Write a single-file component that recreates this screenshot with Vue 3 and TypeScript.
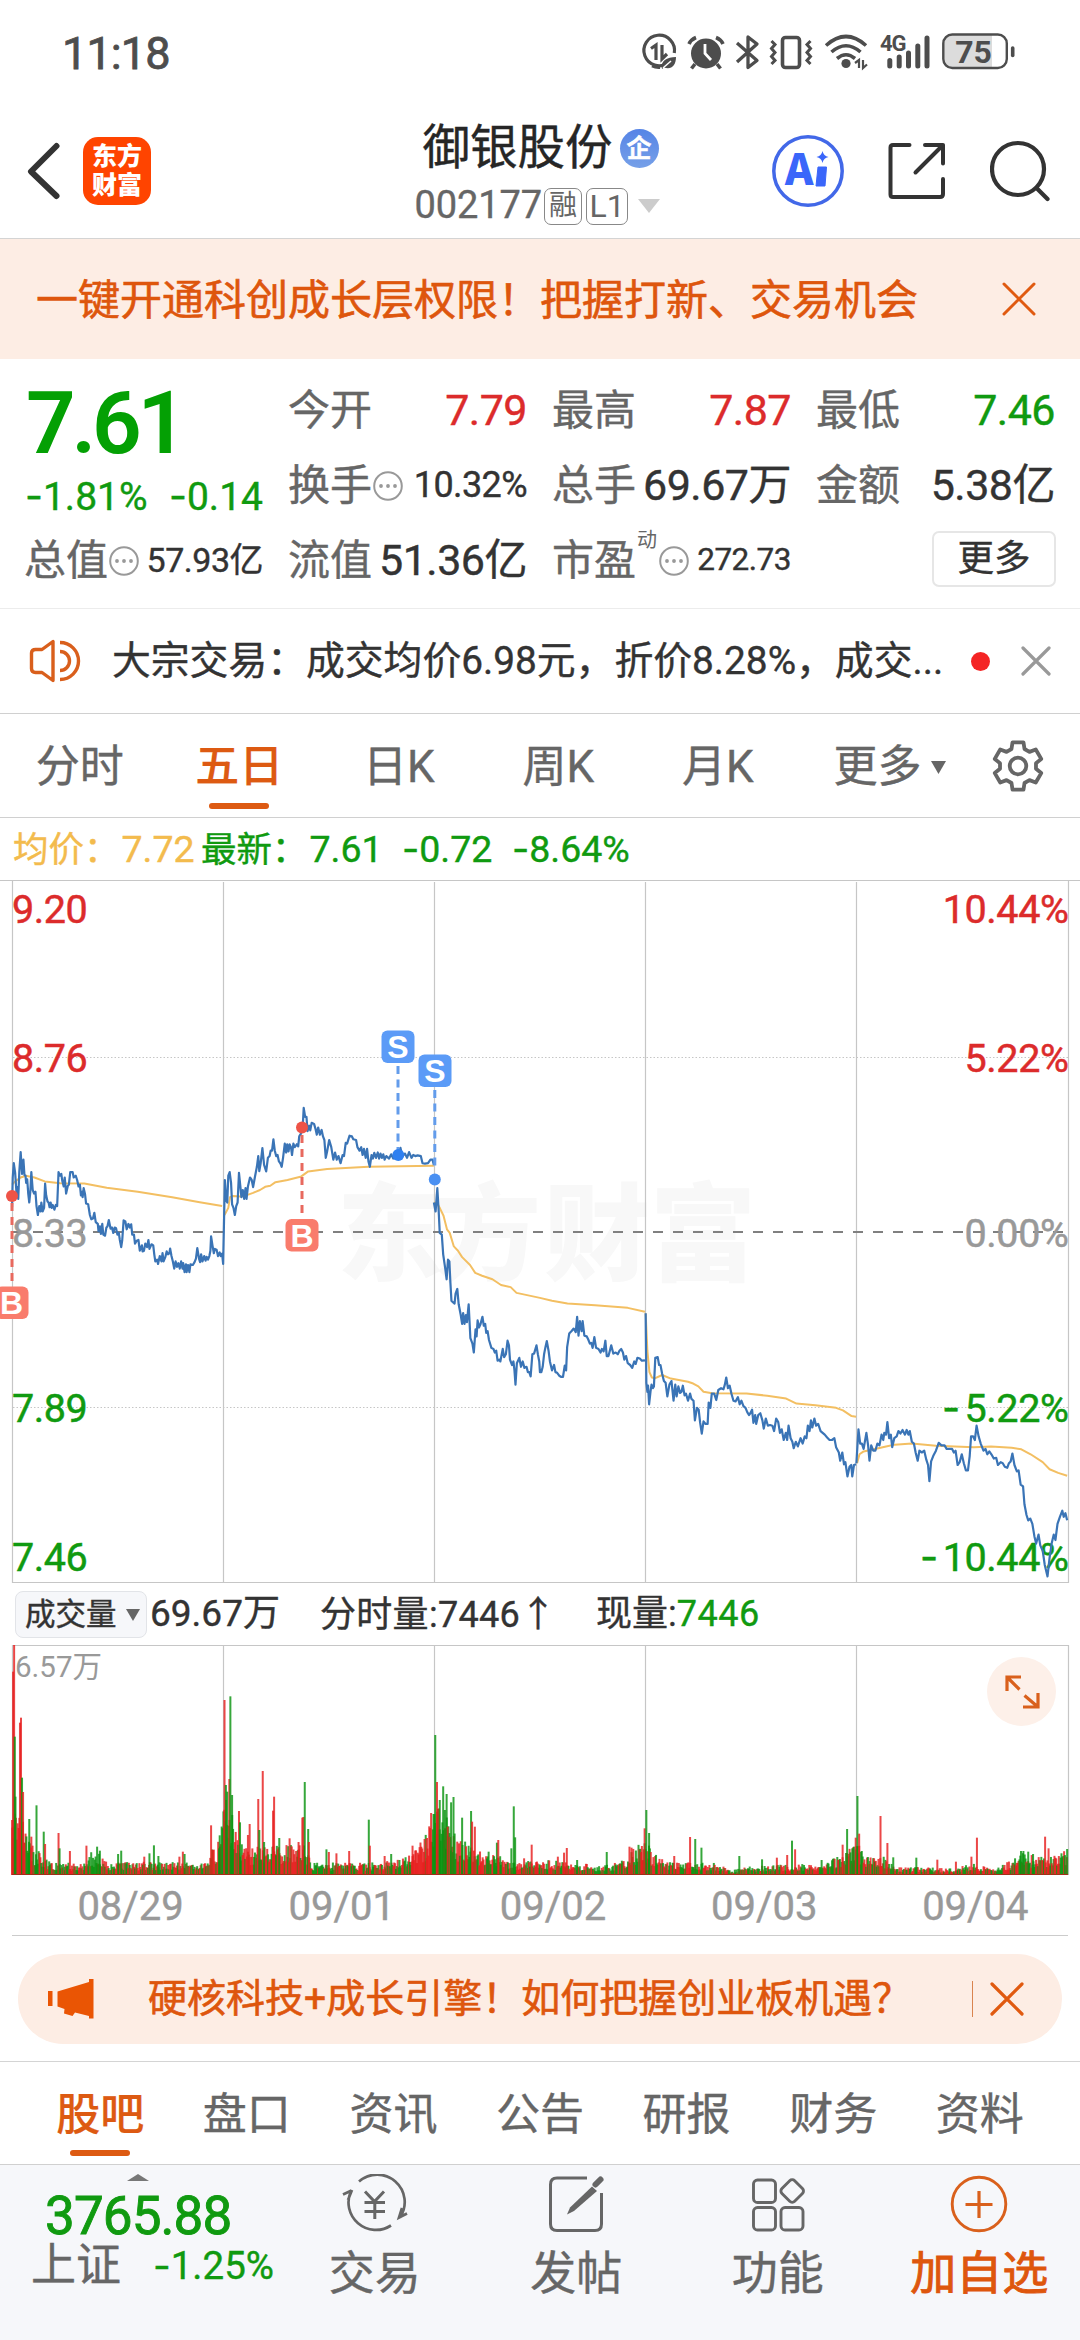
<script setup lang="ts">
type Tone = 'up' | 'down' | 'plain'

interface Cell {
  label: string
  value: string
  tone: Tone
  size?: 'md' | 'sm' | 'xs'
  info?: boolean
  sup?: string
}

const cells: Cell[] = [
  { label: '今开', value: '7.79', tone: 'up' },
  { label: '最高', value: '7.87', tone: 'up' },
  { label: '最低', value: '7.46', tone: 'down' },
  { label: '换手', value: '10.32%', tone: 'plain', size: 'md', info: true },
  { label: '总手', value: '69.67万', tone: 'plain' },
  { label: '金额', value: '5.38亿', tone: 'plain' },
]
const lastRow: Cell[] = [
  { label: '总值', value: '57.93亿', tone: 'plain', size: 'sm', info: true },
  { label: '流值', value: '51.36亿', tone: 'plain' },
  { label: '市盈', value: '272.73', tone: 'plain', size: 'xs', info: true, sup: '动' },
]

const periods = ['分时', '五日', '日K', '周K', '月K']
const sections = ['股吧', '盘口', '资讯', '公告', '研报', '财务', '资料']
const dates = ['08/29', '09/01', '09/02', '09/03', '09/04']

const gridX = [223.5, 434.5, 645.5, 856.5]
const leftScale = [
  { y: 923, t: '9.20', c: '#dc2b2b' },
  { y: 1072, t: '8.76', c: '#dc2b2b' },
  { y: 1247, t: '8.33', c: '#999' },
  { y: 1422, t: '7.89', c: '#109a10' },
  { y: 1571, t: '7.46', c: '#109a10' },
]
const rightScale = [
  { y: 923, t: '10.44%', c: '#dc2b2b' },
  { y: 1072, t: '5.22%', c: '#dc2b2b' },
  { y: 1247, t: '0.00%', c: '#999' },
  { y: 1422, t: '5.22%', c: '#109a10', neg: 942 },
  { y: 1571, t: '10.44%', c: '#109a10', neg: 920 },
]

/* Price and average series, in plot units */
const price: string[] = [
  '35,468 37,385 40,345 44,372 48,430 50,412 53,445 56,370 60,314 64,375 68,335 71,378 74,380 76,400 79,390 82,430 85,455 88,425 91,370 95,420 99,430 103,425 106,465 110,490 114,465 118,480 120,455 124,480 128,470 131,402 134,435 138,452 141,455 144,468 147,455 150,470 153,462 158,475 162,462 166,465 170,370 174,380 178,375 181,395 185,410 188,385 192,430 197,408 200,405 204,370 211,370 214,385 220,380 224,392 228,410 232,405 235,435 238,425 240,440 243,415 247,432 250,458 256,460 261,490 265,502 270,500 274,484 278,510 284,515 286,535 290,522 293,543 297,515 300,545 305,548 309,525 312,522 316,504 321,528 325,525 329,540 333,525 337,527 341,545 345,540 348,560 352,580 355,560 359,505 364,508 368,530 373,515 377,525 381,516 384,545 389,545 392,570 397,562 402,560 406,590 412,575 414,592 418,590 422,570 427,580 431,560 434,585 440,572 445,575 448,600 451,620 456,615 459,627 464,605 469,620 472,597 475,620 480,608 484,592 488,600 492,597 494,584 498,605 502,620 506,640 510,620 514,635 518,625 522,640 526,620 530,640 532,625 536,650 540,628 542,650 546,630 550,650 553,628 560,630 565,622 569,612 573,583 578,612 581,622 584,600 588,620 593,605 597,618 600,607 604,615 608,605 611,590 613,550 617,575 621,597 624,585 629,587 633,605 638,595 641,605 645,598 648,627 653,392 657,450 660,455 663,380 667,370 671,400 674,460 678,470 682,490 686,465 690,455 694,372 698,410 701,440 705,420 709,445 713,415 716,445 720,410 726,385 731,392 735,412 740,385 746,355 750,325 753,367 757,345 762,303 767,350 773,368 778,330 783,325 786,310 790,310 794,278 798,310 802,325 806,322 810,340 814,345 818,355 822,330 827,290 831,315 834,292 838,312 841,292 845,300 848,322 852,290 856,300 862,292 866,298 869,270 874,262 879,245 882,190 886,215 890,215 893,255 898,240 901,253 905,232 912,235 916,248 920,265 924,245 929,265 934,252 938,270 942,280 946,330 950,312 956,280 962,300 968,335 973,315 978,335 983,325 989,345 995,322 999,325 1004,288 1008,290 1015,268 1022,270 1026,278 1034,280 1038,300 1044,310 1049,300 1053,322 1057,305 1062,330 1066,305 1070,340 1074,355 1079,322 1083,332 1087,316 1092,330 1097,315 1101,332 1105,318 1109,330 1113,320 1117,335 1122,325 1130,332 1136,320 1142,332 1148,320 1155,323 1163,302 1168,325 1176,318 1182,330 1188,314 1195,330 1200,322 1206,325 1213,323 1222,325 1227,345 1234,346 1243,345 1250,335 1256,335 1260,350',
  '1260,455 1265,480 1270,415 1274,480 1277,540 1283,545 1287,600 1293,640 1297,670 1301,615 1305,620 1308,680 1311,730 1316,735 1320,738 1323,710 1328,697 1332,740 1338,770 1342,795 1345,765 1349,795 1353,770 1356,790 1361,740 1366,835 1372,850 1376,875 1381,810 1384,830 1387,785 1391,805 1395,797 1401,775 1405,800 1409,795 1412,820 1416,815 1420,840 1427,862 1433,865 1437,875 1441,870 1445,898 1450,895 1453,900 1460,865 1464,888 1469,880 1474,842 1478,855 1481,895 1487,910 1491,900 1494,925 1497,965 1501,905 1508,890 1513,915 1518,900 1523,918 1529,915 1533,930 1537,930 1541,942 1546,880 1551,878 1558,855 1562,880 1566,900 1568,930 1572,930 1576,915 1580,880 1584,860 1588,843 1593,870 1597,900 1603,925 1609,910 1613,930 1618,932 1624,940 1629,943 1635,943 1640,912 1644,925 1647,860 1653,822 1660,815 1666,808 1672,818 1676,775 1680,828 1684,787 1689,815 1692,787 1697,828 1704,830 1708,838 1713,850 1717,848 1721,862 1726,832 1731,862 1738,865 1744,875 1748,865 1753,872 1758,842 1762,885 1767,885 1771,870 1775,855 1781,878 1788,875 1794,880 1799,870 1804,865 1809,875 1813,895 1818,885 1823,905 1830,910 1836,918 1842,900 1846,907 1851,890 1858,892 1864,898 1873,897',
  '1875,765 1877,960 1880,985 1882,968 1885,1020 1889,985 1892,965 1896,975 1899,970 1903,890 1910,888 1914,910 1918,910 1923,935 1928,955 1933,960 1938,998 1944,965 1950,955 1956,1010 1961,965 1965,998 1970,970 1975,988 1979,985 1983,968 1988,995 1992,990 1998,1010 2004,990 2008,1005 2014,1010 2018,1065 2024,1030 2029,1035 2033,1070 2038,1102 2043,1068 2049,1075 2055,1075 2058,1015 2063,1030 2067,990 2074,990 2080,1008 2086,980 2094,975 2101,978 2105,965 2109,945 2114,975 2119,968 2124,990 2130,1010 2136,1012 2143,1000 2148,1020 2153,1010 2159,1025 2165,1030 2170,1042 2175,1050 2179,1045 2184,1035 2188,1072 2193,1050 2196,1075 2202,1050 2208,1045 2214,1065 2218,1088 2224,1060 2230,1080 2236,1078 2243,1080 2248,1095 2254,1060 2260,1070 2265,1100 2270,1090 2276,1120 2282,1100 2286,1120 2290,1080 2296,1115 2301,1125 2305,1143 2311,1125 2317,1138 2325,1115 2331,1130 2337,1110 2342,1115 2346,1080 2351,1095 2355,1065 2359,1085 2365,1060 2370,1080 2376,1075 2383,1095 2389,1100 2395,1105 2402,1113 2409,1120 2416,1120 2423,1115 2428,1140 2436,1155 2440,1178 2446,1155 2451,1188 2455,1182 2461,1222 2467,1195 2472,1190 2475,1222 2480,1190 2486,1188',
  '2487,1185 2493,1090 2498,1130 2503,1130 2508,1145 2516,1100 2521,1135 2525,1178 2530,1135 2536,1150 2542,1150 2548,1130 2554,1135 2560,1105 2565,1120 2568,1100 2573,1105 2577,1070 2582,1115 2587,1105 2591,1140 2597,1115 2604,1110 2609,1095 2615,1102 2621,1092 2628,1105 2633,1092 2638,1105 2642,1095 2648,1125 2654,1130 2659,1155 2665,1178 2670,1150 2677,1155 2684,1150 2690,1175 2695,1190 2699,1235 2704,1180 2710,1165 2718,1150 2726,1128 2734,1135 2743,1135 2749,1145 2757,1145 2765,1145 2770,1155 2775,1150 2781,1190 2787,1182 2793,1160 2799,1185 2805,1205 2811,1205 2816,1165 2820,1110 2826,1110 2831,1120 2836,1080 2842,1110 2848,1130 2856,1150 2862,1145 2867,1160 2873,1152 2879,1160 2886,1172 2893,1170 2898,1190 2906,1182 2912,1185 2918,1195 2925,1198 2930,1185 2935,1180 2940,1158 2946,1190 2953,1208 2958,1205 2964,1245 2971,1250 2975,1300 2981,1330 2986,1345 2992,1340 2998,1355 3004,1390 3009,1410 3016,1385 3021,1415 3028,1430 3034,1470 3042,1502 3048,1450 3054,1410 3060,1385 3065,1400 3071,1355 3078,1335 3085,1318 3089,1335 3094,1325 3099,1345',
]
const average: string[] = [
  '35,405 45,395 60,385 75,380 100,385 130,396 175,401 245,402 310,414 400,425 500,440 580,454 645,465',
  '652,490 663,470 668,440 675,437 700,438 715,435 735,428 755,420 770,411 785,408 800,398 835,392 875,382 895,368 950,361 1070,355 1260,352',
  '1260,455 1270,458 1278,472 1288,492 1298,530 1306,540 1318,578 1330,590 1342,608 1365,630 1380,652 1400,660 1430,670 1455,686 1483,692 1500,708 1568,722 1603,730 1648,738 1728,743 1823,750 1873,761',
  '1875,765 1880,870 1886,930 1893,945 1903,947 1923,938 1948,948 1998,957 2013,962 2028,970 2043,985 2068,989 2168,990 2228,996 2283,1004 2313,1018 2368,1023 2428,1030 2448,1037 2473,1053 2486,1055',
  '2489,1185 2496,1160 2508,1152 2538,1146 2573,1138 2598,1133 2648,1130 2718,1136 2828,1140 2878,1138 2938,1142 2966,1146 2993,1160 3028,1182 3048,1202 3073,1212 3099,1220',
]

/* Volume: an envelope for quiet minutes plus the individual peaks */
const envelope: [number, number][] = [
  [35, 200], [75, 140], [100, 80], [135, 50], [160, 36], [245, 36], [262, 70], [290, 60], [310, 36], [400, 38], [500, 38],
  [560, 36], [600, 50], [640, 110], [655, 240], [680, 160], [700, 95], [730, 80], [800, 85], [870, 95], [895, 75],
  [905, 36], [1100, 36], [1170, 48], [1200, 65], [1240, 120], [1265, 230], [1300, 180], [1330, 105], [1380, 85],
  [1400, 60], [1440, 65], [1470, 38], [1568, 45], [1628, 40], [1668, 34], [1768, 29], [1818, 50], [1868, 110],
  [1898, 66], [1928, 44], [2008, 36], [2068, 38], [2128, 14], [2168, 26], [2328, 32], [2388, 24], [2438, 62],
  [2468, 85], [2498, 85], [2528, 56], [2568, 54], [2598, 24], [2768, 20], [2828, 34], [2888, 16], [2938, 44],
  [2968, 68], [3008, 54], [3048, 50], [3100, 78],
]
const peaks =
  '35,720r 38,275r 41,195r 43,470g 45,650g 58,428r 61,413r 64,593g 67,636r 85,717g 91,770r 106,676g 127,755g 131,792r 170,759r 173,805g 203,813r 251,797r 282,800g 290,812g 343,822g 352,812g 419,830r 434,820g 447,796g 460,828g 521,830r 531,815r 536,822g 613,736r 638,766g 652,360r 656,615g 660,635g 666,597r 669,349g 674,645g 694,693r 697,727g 720,765r 725,732r 750,657r 753,750g 763,573r 767,786g 793,692r 796,650r 811,774g 841,775r 867,786r 878,713r 881,711r 885,606g 895,747g 897,786r 948,808g 955,816r 977,820r 1014,813r 1071,719g 1074,797r 1117,828r 1136,822g 1198,797r 1233,777r 1240,774r 1252,699r 1259,702g 1264,465g 1269,606r 1277,660g 1287,619g 1292,690g 1297,642g 1300,740r 1310,667g 1317,651g 1342,713g 1368,693g 1371,725r 1379,740r 1419,815g 1443,788g 1447,780r 1485,805g 1492,679g 1496,772g 1522,835r 1544,794r 1620,830r 1638,818r 1646,804r 1676,840g 1762,816g 1828,800r 1834,803r 1864,798r 1872,745r 1877,690g 1885,759g 1958,828r 2004,771r 2019,777g 2037,803g 2147,828g 2213,838g 2256,833r 2286,825r 2300,782g 2309,808r 2386,840g 2447,794r 2460,747g 2475,805g 2485,773r 2490,648g 2495,761r 2557,708r 2577,789r 2594,832g 2661,833g 2722,839r 2776,845r 2821,830r 2837,773r 2965,813g 2972,813g 2986,815g 3000,822g 3035,770r 3045,805r 3099,807g'

let seed = 20250904
const rand = (): number => {
  seed = (seed * 1664525 + 1013904223) % 4294967296
  return seed / 4294967296
}
const envAt = (x: number): number => {
  for (let i = 1; i < envelope.length; i++) {
    const [x0, h0] = envelope[i - 1]
    const [x1, h1] = envelope[i]
    if (x <= x1) return h0 + ((h1 - h0) * (x - x0)) / (x1 - x0)
  }
  return 40
}
/* Share of rising minutes around x */
const redShare = (x: number): number => {
  if (x > 815 && x < 880) return 0.85
  if (x > 1195 && x < 1254) return 0.95
  if (x > 255 && x < 295) return 0.2
  if (x > 1255 && x < 1330) return 0.3
  if (x > 2960 && x < 3010) return 0.25
  return 0.52
}
interface Bar { x: number; h: number; up: boolean }
const bars: Bar[] = []
for (let i = 0; i < 1205; i++) {
  const ux = 36 + i * 2.543
  bars.push({ x: ux / 2.904, h: (envAt(ux) * (0.35 + 0.7 * rand())) / 3, up: rand() < redShare(ux) })
}
for (const p of peaks.split(' ')) {
  const m = /(\d+),(\d+)([rg])/.exec(p)
  if (m) bars.push({ x: Number(m[1]) / 2.904, h: (885 - Number(m[2])) / 3, up: m[3] === 'r' })
}

const polar = (r: number, deg: number): string => {
  const a = (deg * Math.PI) / 180
  return `${(r * Math.sin(a)).toFixed(2)},${(-r * Math.cos(a)).toFixed(2)}`
}
const gear = [0, 60, 120, 180, 240, 300]
  .flatMap((k) => [polar(18.2, k - 21), polar(24.3, k - 13), polar(24.3, k + 13), polar(18.2, k + 21)])
  .join(' ')
</script>

<template>
  <div class="screen">
    <div class="status">
      <span class="time">11:18</span>
      <svg class="status-icons" width="386" height="44" viewBox="640 30 386 44" fill="none" stroke="#4d4d4d">
        <path d="M668 63A15.300 15.300 0 1 1 674.300 53" stroke-width="3.200" />
        <path d="M660 67.500A15.300 15.300 0 0 1 652 66" stroke-width="3" />
        <path d="M651 48.500L656 45V60M662 45V59L667 54" stroke-width="3.200" />
        <path d="M662 69C660 61 667 57 676 57C676 66 671 70 664 67.500L662 69Z" fill="#4d4d4d" stroke="none" />
        <path d="M663 68L671 61" stroke="#fff" stroke-width="1.500" />
        <circle cx="706" cy="53.500" r="15" fill="#4d4d4d" stroke="none" />
        <path d="M689 44Q691 39.500 696 37.500M716 37.500Q721 39.500 723 44M695 64L691.500 68.500M717 64L720.500 68.500" stroke-width="3.600" />
        <path d="M705 44V53.500L711 60" stroke="#fff" stroke-width="2.800" />
        <path d="M737 43L757 60.500L748 67.500V37L757 44L737 62" stroke-width="3.300" stroke-linejoin="round" />
        <rect x="782.500" y="37.500" width="17" height="30" rx="3" stroke-width="3.600" />
        <path d="M771.500 41L775 44.500L771.500 48.500L775 52.500L771.500 56.500L775 60.500L771.500 64M810.500 41L807 44.500L810.500 48.500L807 52.500L810.500 56.500L807 60.500L810.500 64" stroke-width="3" />
        <path d="M826 45.500Q846 27.500 866 45.500M831.500 52Q846 39.500 860.500 52M837 58.500Q846 51 855 58.500" stroke-width="3.600" />
        <circle cx="846" cy="63.500" r="4.600" fill="#4d4d4d" stroke="none" />
        <path d="M855 63L859 60V68M863 60V68L867 64.500" stroke-width="2.200" />
        <path d="M889.800 60.500V66M899.200 57V66M908.500 53V66M917.800 46V66M927 38V66" stroke-width="5" stroke-linecap="round" />
        <path d="M953 35H992V68H953Q944 66 944 59V44Q944 36 953 35Z" fill="#dcdcdc" stroke="none" />
        <rect x="943.300" y="34.500" width="63.500" height="33.500" rx="9" stroke-width="2.400" />
        <path d="M1012.700 48V55.500" stroke-width="3.600" stroke-linecap="round" />
        <text x="880" y="51" class="net" fill="#4d4d4d" stroke="none">4G</text>
        <text x="973.500" y="63" class="bat" fill="#4d4d4d" stroke="none" text-anchor="middle">75</text>
      </svg>
    </div>

    <header class="header">
      <div class="head-left">
        <svg width="34" height="58" viewBox="0 0 34 58"><path d="M30.500 4L5 29.500L30.500 54" fill="none" stroke="#333" stroke-width="6" stroke-linecap="round" stroke-linejoin="round" /></svg>
        <div class="logo"><span>东方</span><span>财富</span></div>
      </div>
      <div class="head-mid">
        <div class="name">御银股份<span class="qi">企</span></div>
        <div class="code">
          <span>002177</span><span class="chip rong">融</span><span class="chip l1">L1</span>
          <svg width="22" height="14" viewBox="0 0 22 14"><path d="M0 0H22L11 14Z" fill="#ccc" /></svg>
        </div>
      </div>
      <div class="head-right">
        <svg width="72" height="72" viewBox="0 0 72 72">
          <circle cx="36" cy="36" r="34.200" fill="none" stroke="#4268e8" stroke-width="3.500" />
          <text x="13" y="49.500" class="ai">A</text>
          <path d="M46 32H54.500L53 51H44Z" fill="#3a66fa" stroke="#3a66fa" stroke-width="1" stroke-linejoin="round" />
          <path d="M50.500 16Q51.500 21 56.500 22Q51.500 23 50.500 28Q49.500 23 44.500 22Q49.500 21 50.500 16Z" fill="#3a66fa" />
        </svg>
        <svg width="60" height="60" viewBox="0 0 60 60" fill="none" stroke="#333" stroke-width="4" stroke-linecap="round" stroke-linejoin="round">
          <path d="M22.500 4H6Q3.500 4 3.500 6.500V53.500Q3.500 56 6 56H53Q56 56 56 53V38M38 4H56V22.500M56 4L28.500 31.500" />
        </svg>
        <svg width="60" height="62" viewBox="0 0 60 62" fill="none" stroke="#333" stroke-width="4.200" stroke-linecap="round">
          <circle cx="28" cy="29" r="26" /><path d="M46.500 48L57.500 59" />
        </svg>
      </div>
    </header>

    <div class="promo">
      <span>一键开通科创成长层权限！把握打新、交易机会</span>
      <svg width="34" height="34" viewBox="0 0 34 34"><path d="M2 2L32 32M32 2L2 32" stroke="#e05a10" stroke-width="3" stroke-linecap="round" /></svg>
    </div>

    <section class="quote">
      <div class="now">
        <div class="last">7.61</div>
        <div class="chg"><span><i>-</i>1.81%</span><span><i>-</i>0.14</span></div>
      </div>
      <div v-for="c in cells" :key="c.label" class="cell">
        <span class="lab">{{ c.label }}</span>
        <svg v-if="c.info" class="info" width="30" height="30" viewBox="0 0 30 30"><circle cx="15" cy="15" r="13.800" fill="none" stroke="#999" stroke-width="2" /><path d="M8 15h.01M15 15h.01M22 15h.01" stroke="#999" stroke-width="3.800" stroke-linecap="round" /></svg>
        <span class="val" :class="[c.tone, c.size]">{{ c.value }}</span>
      </div>
      <div v-for="c in lastRow" :key="c.label" class="cell">
        <span class="lab">{{ c.label }}</span>
        <span v-if="c.sup" class="sup">{{ c.sup }}</span>
        <svg v-if="c.info" class="info" width="30" height="30" viewBox="0 0 30 30"><circle cx="15" cy="15" r="13.800" fill="none" stroke="#999" stroke-width="2" /><path d="M8 15h.01M15 15h.01M22 15h.01" stroke="#999" stroke-width="3.800" stroke-linecap="round" /></svg>
        <span class="val" :class="[c.tone, c.size]">{{ c.value }}</span>
      </div>
      <div class="cell end"><button class="more">更多</button></div>
    </section>

    <div class="notice">
      <svg width="52" height="44" viewBox="0 0 52 44" fill="none" stroke="#d95f1c" stroke-width="3.400">
        <path d="M24 2.500V41.500L13 33.500H6.500Q2.500 33.500 2.500 29.500V14Q2.500 10.500 6.500 10.500H13Z" stroke-linejoin="round" />
        <path d="M31 3.500A18.500 18.500 0 0 1 31 40.500M31 12.500A9.500 9.500 0 0 1 31 31.500" />
      </svg>
      <span class="msg">大宗交易：成交均价6.98元，折价8.28%，成交...</span>
      <span class="dot"></span>
      <svg width="30" height="30" viewBox="0 0 30 30"><path d="M2 2L28 28M28 2L2 28" stroke="#999" stroke-width="3.200" stroke-linecap="round" /></svg>
    </div>

    <nav class="periods">
      <div v-for="p in periods" :key="p" class="tab" :class="{ on: p === '五日' }">{{ p }}</div>
      <div class="tab drop">更多<svg width="15" height="13" viewBox="0 0 15 13"><path d="M0 0H15L7.500 13Z" fill="#666" /></svg></div>
      <svg class="gear" width="54" height="54" viewBox="-27 -27 54 54" fill="none" stroke="#666" stroke-width="3.800">
        <polygon :points="gear" stroke-linejoin="round" /><circle r="8.300" />
      </svg>
    </nav>

    <div class="legend">
      <span class="avg">均价：<b>7.72</b></span>
      <span class="new">最新：<b>7.61</b></span>
      <span class="d1"><i>-</i>0.72</span>
      <span class="d2"><i>-</i>8.64%</span>
    </div>

    <svg class="plot" width="1080" height="703" viewBox="0 880 1080 703">
      <g class="mark"><text x="337" y="1272">东</text><text x="435" y="1272">方</text><text x="544" y="1272">财</text><text x="650" y="1272">富</text></g>
      <g stroke="#c6c6c6" stroke-width="1.200">
        <path d="M0 880.500H1080" />
        <path d="M12.500 881V1582.500H1068.500V881" fill="none" />
        <path v-for="x in gridX" :key="x" :d="`M${x} 882V1582`" />
        <path d="M13 1057.500H1068M13 1407.500H1068" stroke-width="1" stroke-dasharray="1.500 2" />
      </g>
      <path d="M13 1232H1068" stroke="#808080" stroke-width="1.800" stroke-dasharray="10 10" />
      <g class="scale">
        <text v-for="l in leftScale" :key="l.y" x="12" :y="l.y" :fill="l.c" :stroke="l.c">{{ l.t }}</text>
        <template v-for="r in rightScale" :key="r.y">
          <text x="1068.500" :y="r.y" :fill="r.c" :stroke="r.c" text-anchor="end">{{ r.t }}</text>
          <text v-if="r.neg" class="neg" :x="r.neg" :y="r.y" :fill="r.c" :stroke="r.c">-</text>
        </template>
      </g>
      <g class="series" transform="translate(0 1040) scale(0.34435 0.35714)">
        <polyline v-for="(s, i) in average" :key="'a' + i" :points="s" stroke="#f3bf62" stroke-width="2" />
        <polyline v-for="(s, i) in price" :key="'p' + i" :points="s" stroke="#3a74b6" stroke-width="2.200" />
      </g>
      <g fill="none" stroke-width="3">
        <path d="M12 1203V1286M302 1135V1217" stroke="#e8695e" stroke-dasharray="8 6" />
        <path d="M398 1066V1150M434.800 1090V1166" stroke="#639ceb" stroke-dasharray="8 5.500" />
      </g>
      <circle cx="12" cy="1196" r="6" fill="#ee5347" /><circle cx="302" cy="1127.500" r="6" fill="#ee5347" />
      <circle cx="398.300" cy="1155" r="6" fill="#2f80f0" /><circle cx="434.800" cy="1179.500" r="6" fill="#4a90f2" />
      <g class="flag">
        <rect x="-4" y="1286.500" width="32.500" height="32.500" rx="6" fill="#f97c6c" /><text x="11.500" y="1314">B</text>
        <rect x="285.500" y="1219" width="33" height="32.500" rx="6" fill="#f97c6c" /><text x="302" y="1246.500">B</text>
        <rect x="381.500" y="1030.500" width="33" height="32.500" rx="6" fill="#5b9bf7" /><text x="398" y="1058">S</text>
        <rect x="418.500" y="1054.500" width="33" height="32.500" rx="6" fill="#5b9bf7" /><text x="435" y="1082">S</text>
      </g>
    </svg>

    <div class="vol-head">
      <div class="pick">成交量<svg width="14" height="12" viewBox="0 0 14 12"><path d="M0 0H14L7 12Z" fill="#666" /></svg></div>
      <span class="v1">69.67万</span>
      <span class="v2">分时量:7446<em>↑</em></span>
      <span class="v3">现量:<b>7446</b></span>
    </div>

    <div class="vol">
      <svg width="1080" height="231" viewBox="0 1645 1080 231">
        <path d="M12.500 1875V1645.500H1068.500V1875" fill="none" stroke="#c6c6c6" stroke-width="1.200" />
        <path v-for="x in gridX" :key="x" :d="`M${x} 1646V1875`" stroke="#c6c6c6" stroke-width="1.200" />
        <rect v-for="(b, i) in bars" :key="i" :x="b.x - 1" :y="1875 - b.h" width="2" :height="b.h" :fill="b.up ? '#e61e1e' : '#0a9410'" fill-opacity="0.820" />
        <path d="M12 1874.500H1068" stroke="#a03018" />
        <text x="15" y="1677" class="vmax">6.57万</text>
      </svg>
      <div class="expand">
        <svg width="36" height="36" viewBox="0 0 36 36" fill="none" stroke="#d9601c" stroke-width="3.200"><path d="M17 3H3V17M3 3L15.500 15.500M19 33H34V19M34 33L20.500 21.500" /></svg>
      </div>
    </div>

    <div class="dates"><span v-for="d in dates" :key="d">{{ d }}</span></div>

    <div class="pill-wrap">
      <div class="pill">
        <svg width="46" height="40" viewBox="0 0 46 40" fill="#ea5504"><path d="M0 12H4.500V27H0ZM9.500 12.500L41 3V0H45.500V39.500H41V37L27 33.500L24.500 37L16 34.500L16.500 30L9.500 27.500Z" /></svg>
        <span class="ptxt">硬核科技+成长引擎！如何把握创业板机遇？</span>
        <span class="bar"></span>
        <svg width="34" height="34" viewBox="0 0 34 34"><path d="M2 2L32 32M32 2L2 32" stroke="#e05a10" stroke-width="3.200" stroke-linecap="round" /></svg>
      </div>
    </div>

    <nav class="sections">
      <div v-for="s in sections" :key="s" class="tab" :class="{ on: s === '股吧' }">{{ s }}</div>
    </nav>

    <footer class="dock">
      <div class="index">
        <svg width="22" height="7" viewBox="0 0 22 7"><path d="M0 7L11 0L22 7Z" fill="#777" /></svg>
        <div class="pts">3765.88</div>
        <div class="row"><span>上证</span><span class="pct"><i>-</i>1.25%</span></div>
      </div>
      <div class="act">
        <svg width="66" height="60" viewBox="0 0 66 60" fill="none" stroke="#666" stroke-width="2.700">
          <path d="M17 7.500A27.500 27.500 0 0 1 58 43.500M65 39.500L57 43.500L60 34M49 51.500A27.500 27.500 0 0 1 9 17M1 20.500L9.500 16.500M10 16L6 26" />
          <path d="M23 17.500L32.500 27.500L42 17.500M22.500 28.500H43M22.500 37.500H43M32.800 27V45" stroke-width="3" />
        </svg>
        <span>交易</span>
      </div>
      <div class="act">
        <svg width="66" height="60" viewBox="0 0 66 60" fill="none" stroke="#666" stroke-width="3">
          <path d="M44 4H14Q7.500 4 7.500 10.500V50Q7.500 56.500 14 56.500H52Q58.500 56.500 58.500 50V19" />
          <path d="M49 12.500L54 17L31 37L24 40.500L27 33.500Z" fill="#666" stroke="none" />
          <path d="M52.500 10.500L57.500 5.500" stroke-width="6" stroke-linecap="round" />
        </svg>
        <span>发帖</span>
      </div>
      <div class="act">
        <svg width="66" height="60" viewBox="0 0 66 60" fill="none" stroke="#666" stroke-width="2.900">
          <rect x="8.500" y="6" width="22" height="22.500" rx="4" /><rect x="8.500" y="33.500" width="22" height="22.500" rx="4" /><rect x="36" y="33.500" width="22" height="22.500" rx="4" />
          <rect x="38.200" y="8" width="18" height="18" rx="3.500" transform="rotate(45 47.200 17)" />
        </svg>
        <span>功能</span>
      </div>
      <div class="act hot">
        <svg width="66" height="60" viewBox="0 0 66 60" fill="none" stroke="#d9601c" stroke-width="2.900">
          <circle cx="33" cy="30" r="26.800" /><path d="M33 17V44M19.500 30.500H46.500" stroke-width="3.200" />
        </svg>
        <span>加自选</span>
      </div>
    </footer>
  </div>
</template>

<style>
body {
  margin: 0;
  background: #fff;
}
</style>

<style scoped>
.screen {
  width: 1080px;
  height: 2340px;
  overflow: hidden;
  background: #fff;
  color: #333;
  font-family: Roboto, 'Noto Sans CJK SC', sans-serif;
  line-height: 1.15;
  -webkit-text-stroke-width: 0.4px;
  display: flex;
  flex-direction: column;
}
.screen > * { flex: none; box-sizing: border-box; }
svg { display: block; flex: none; }
span, .tab, .name { white-space: nowrap; }
i { font-style: normal; font-family: Inter, sans-serif; letter-spacing: 0; line-height: 1; }
b { font-weight: inherit; }

.status { height: 100px; padding: 30px 54px 0 62px; display: flex; justify-content: space-between; }
.time { font-size: 45px; line-height: 48px; color: #4d4d4d; letter-spacing: -0.900px; -webkit-text-stroke-width: 0.8px; }
.net { font-size: 22px; font-weight: 700; letter-spacing: -1px; }
.bat { font-size: 32px; font-weight: 700; }

.header { height: 139px; padding: 0 30px 0 26px; border-bottom: 1px solid #d4d4d4; display: grid; grid-template-columns: 1fr auto 1fr; align-items: start; }
.head-left { display: flex; align-items: center; gap: 23px; padding-top: 37px; }
.logo { width: 68px; height: 68px; border-radius: 15px; background: #ff4400; color: #fff; display: flex; flex-direction: column; align-items: center; justify-content: center; font-weight: 900; font-size: 25px; line-height: 29px; -webkit-text-stroke-width: 0; }
.head-mid { padding: 18px 0 0 11px; }
.name { display: flex; align-items: center; font-size: 47.500px; line-height: 60px; color: #262626; }
.qi { width: 39px; height: 39px; margin: 0 0 0 7px; border-radius: 50%; background: linear-gradient(#5684e6, #76a0e8); color: #fff; font-size: 25px; line-height: 39px; text-align: center; font-weight: 700; }
.code { display: flex; align-items: center; height: 38px; font-size: 38px; color: #666; margin: 9px 0 0 -8px; width: 250px; }
.code > span:first-child { letter-spacing: -0.100px; }
.chip { box-sizing: border-box; height: 37px; border: 1.500px solid #888; border-radius: 7px; text-align: center; line-height: 34px; -webkit-text-stroke-width: 0; }
.rong { width: 38px; margin-left: 2px; font-size: 28px; }
.l1 { width: 42px; margin: 0 10px 0 4px; font-size: 32px; }
.head-right { display: flex; align-items: center; justify-content: flex-end; gap: 43px; padding-top: 35px; }
.ai { font: 900 43px 'Noto Sans CJK SC', sans-serif; fill: #3a66fa; }

.promo { height: 120px; padding: 0 44px 0 36px; background: #fdede4; display: flex; align-items: center; justify-content: space-between; font-size: 42px; color: #de560d; -webkit-text-stroke-width: 0.6px; }
.promo span { margin-top: 4px; }

.quote { height: 250px; padding: 14px 25px 0; border-bottom: 1px solid #ececec; display: grid; grid-template-columns: repeat(4, 238px); grid-template-rows: repeat(3, 75px); column-gap: 26px; }
.now { grid-row: 1 / 3; color: #04a004; padding-top: 10px; }
.last { font-size: 87px; line-height: 80px; font-weight: 600; letter-spacing: -4.200px; padding-left: 1px; -webkit-text-stroke-width: 0; }
.chg { display: flex; justify-content: space-between; font-size: 39px; line-height: 50px; color: #109a10; margin-top: 9px; }
.cell { display: flex; align-items: center; }
.lab { font-size: 42px; color: #666; margin: 1px auto 0 -1px; letter-spacing: 0; }
.info { margin-right: auto; margin-left: 0; }
.lab:has(+ .info), .lab:has(+ .sup) { margin-right: 1px; }
.sup { font-size: 20px; color: #666; align-self: flex-start; margin: 6px 2px 0 0; -webkit-text-stroke-width: 0; }
.val { font-size: 43px; letter-spacing: -0.500px; }
.val.md { font-size: 36px; letter-spacing: -0.600px; }
.val.sm { font-size: 34px; }
.val.xs { font-size: 31.500px; letter-spacing: -0.500px; }
.val.up { color: #dc2b2b; }
.val.down { color: #109a10; }
.end { justify-content: flex-end; }
.more { box-sizing: border-box; width: 124px; height: 56px; margin: -4px -1px 0 0; border: 2px solid #e6e6e6; border-radius: 7px; background: #fff; font: inherit; font-size: 36.500px; color: #333; padding: 0; line-height: 50px; -webkit-text-stroke-width: 0.4px; }

.notice { height: 105px; padding: 0 29px; border-bottom: 1px solid #d0d0d0; display: flex; align-items: center; }
.msg { margin-left: 31px; font-size: 38.800px; width: 833px; }
.dot { width: 19px; height: 19px; border-radius: 50%; background: #f42424; margin: 0 auto 0 26px; }

.periods { height: 104px; padding-right: 35px; border-bottom: 1px solid #d0d0d0; display: flex; align-items: center; }
.tab { height: 100%; box-sizing: border-box; padding-top: 4px; position: relative; display: flex; align-items: center; justify-content: center; font-size: 44px; color: #666; }
.periods .tab { width: 159.500px; }
.periods .drop { width: auto; padding-left: 36px; margin-right: auto; gap: 9px; }
.tab.on { color: #dd5a12; font-weight: 500; -webkit-text-stroke-width: 0.2px; }
.tab.on::after { content: ''; position: absolute; left: 50%; bottom: 8px; width: 60px; height: 6px; margin-left: -30px; border-radius: 3px; background: #dd5a12; }

.legend { height: 62px; padding: 1px 0 0 13px; display: flex; align-items: center; font-size: 35.500px; color: #109a10; }
.legend b, .d1, .d2 { font-size: 37.500px; }
.legend b { margin-left: 2px; }
.avg { width: 188px; color: #f3bb4d; }
.new { width: 201px; }
.d1 { width: 110px; }

.series { fill: none; stroke-linejoin: round; }
.series polyline { vector-effect: non-scaling-stroke; }
.mark { font: 900 106px 'Noto Sans CJK SC', sans-serif; fill: #f8f8f8; }
.scale { font-size: 39.500px; letter-spacing: -0.400px; stroke-width: 0.5px; }
.neg { font-family: Inter, sans-serif; }
.flag { font: 700 32px 'Liberation Sans', sans-serif; text-anchor: middle; }
.flag text { fill: #fff; }

.vol-head { height: 62px; padding: 1px 0 0 15px; display: flex; align-items: center; font-size: 36px; }
.pick { box-sizing: border-box; width: 132px; height: 47px; padding-left: 9px; background: #f6f7fa; border: 1.500px solid #e2e4e8; border-radius: 8px; display: flex; align-items: center; gap: 9px; font-size: 30.500px; }
.v1 { margin-left: 3px; width: 170px; font-size: 37px; }
.v2 { width: 276px; letter-spacing: 0.300px; }
.v2 em { font-style: normal; font-family: 'Noto Sans CJK SC', sans-serif; line-height: 1; }
.v3 b { color: #109a10; letter-spacing: 0.500px; }

.vol { position: relative; height: 231px; }
.vmax { font-size: 29.500px; fill: #999; }
.expand { position: absolute; right: 24px; top: 12px; width: 69px; height: 69px; border-radius: 50%; background: #fdf0e9; display: flex; align-items: center; justify-content: center; }

.dates { height: 60px; margin: 0 12px; padding-left: 13px; border-bottom: 1.500px solid #ccc; display: flex; }
.dates span { flex: none; width: 211.200px; text-align: center; font-size: 40px; line-height: 62px; color: #999; }

.pill-wrap { height: 126px; padding: 18px 18px 0; border-bottom: 1px solid #d4d4d4; }
.pill { height: 90px; border-radius: 45px; background: #fdede4; padding: 0 38px 0 30px; display: flex; align-items: center; font-size: 39px; color: #de560d; -webkit-text-stroke-width: 0.6px; }
.ptxt { margin-left: 54px; }
.bar { width: 1.500px; height: 36px; background: #d9844f; margin: 0 17px 0 auto; }

.sections { height: 103px; padding: 0 27px; border-bottom: 1px solid #d0d0d0; display: flex; }
.sections .tab { flex: 1; padding-top: 4px; }

.dock { height: 175px; background: #f6f7fa; display: flex; }
.index { width: 274px; padding-top: 9px; }
.index svg { margin-left: 127px; }
.pts { font-size: 53px; line-height: 50px; margin: 10px 0 0 45px; color: #109a10; letter-spacing: -0.900px; -webkit-text-stroke-width: 0.9px; }
.row { display: flex; align-items: center; justify-content: space-between; padding: 0 0 0 31px; font-size: 45px; line-height: 50px; color: #666; margin-top: 0; }
.row .pct { font-size: 38.500px; color: #109a10; }
.act { width: 201.500px; padding-top: 9px; display: flex; flex-direction: column; align-items: center; font-size: 46px; line-height: 60px; color: #666; }
.act span { margin-top: 9px; }
.act.hot { color: #de560d; -webkit-text-stroke-width: 0.9px; }
</style>
